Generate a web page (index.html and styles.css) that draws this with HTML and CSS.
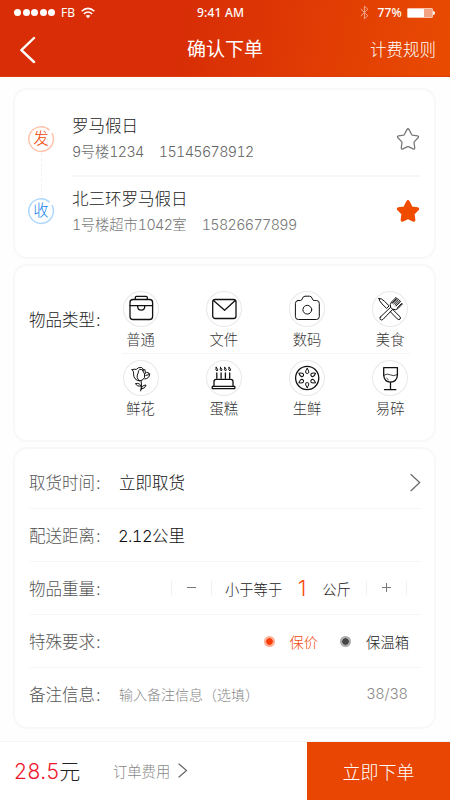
FILE: index.html
```html
<!DOCTYPE html>
<html lang="zh-CN">
<head>
<meta charset="utf-8">
<title>确认下单</title>
<link rel="stylesheet" href="styles.css">
</head>
<body>
<header class="header">
  <div class="status">
    <div class="status-left">
      <span class="dots"><i></i><i></i><i></i><i></i><i></i></span>
      <span class="carrier">FB</span>
      <svg class="wifi" viewBox="0 0 14 12" width="14" height="12"><path d="M.6 4.200Q7-1.400 13.400 4.200M2.800 6.900q4.200-3.700 8.400 0" fill="none" stroke="#fff" stroke-width="1.500"/><path d="M4.600 8.800Q7 7 9.400 8.800L7 11.200z" fill="#fff"/></svg>
    </div>
    <div class="clock">9:41 AM</div>
    <div class="status-right">
      <svg viewBox="0 0 9 15" width="9" height="15"><path d="M.8 4l7 6.800-3.400 3V1.200l3.400 3-7 6.800" fill="none" stroke="#f3a78f" stroke-width="1"/></svg>
      <span class="percent">77%</span>
      <span class="battery"></span>
    </div>
  </div>
  <div class="nav">
    <svg class="back" viewBox="0 0 16 28" width="16" height="28"><path d="M14 2L1.400 14.200 14 26" fill="none" stroke="#fff" stroke-width="2.400" stroke-linecap="round" stroke-linejoin="round"/></svg>
    <h1>确认下单</h1>
    <a class="rules">计费规则</a>
  </div>
</header>

<main>
  <section class="card addresses">
    <div class="route">
      <span class="badge from"><svg viewBox="0 0 28 28"><path d="M22.500 5.100A12.300 12.300 0 1 0 24.900 8.200"/></svg><b>发</b></span>
      <span class="track"></span>
      <span class="badge to"><svg viewBox="0 0 28 28"><path d="M22.500 5.100A12.300 12.300 0 1 0 24.900 8.200"/></svg><b>收</b></span>
    </div>
    <div class="places">
      <div class="place">
        <div><div class="name">罗马假日</div><div class="detail"><span><span class="n">9</span>号楼<span class="n">1234</span></span><span class="n">15145678912</span></div></div>
        <svg class="star" viewBox="0 0 26 26"><path d="M11.800 2.900Q13 .9 14.200 2.900l2.700 5.300q.2.400.6.500l5.800 1q2 .6.6 2l-4.200 4.400q-.3.300-.2.700l.8 5.700q0 1.900-1.800 1.200l-5-2.400q-.5-.2-1 0l-5 2.400q-1.800.7-1.800-1.200l.8-5.700q.1-.4-.2-.7L2.100 11.700q-1.400-1.400.6-2l5.800-1q.4-.1.6-.5z"/></svg>
      </div>
      <div class="place second">
        <div><div class="name">北三环罗马假日</div><div class="detail"><span><span class="n">1</span>号楼超市<span class="n">1042</span>室</span><span class="n">15826677899</span></div></div>
        <svg class="star on" viewBox="0 0 26 26"><path d="M11.800 2.900Q13 .9 14.200 2.900l2.700 5.300q.2.400.6.500l5.800 1q2 .6.6 2l-4.200 4.400q-.3.300-.2.700l.8 5.700q0 1.900-1.800 1.200l-5-2.400q-.5-.2-1 0l-5 2.400q-1.800.7-1.800-1.200l.8-5.700q.1-.4-.2-.7L2.100 11.700q-1.400-1.400.6-2l5.800-1q.4-.1.6-.5z"/></svg>
      </div>
    </div>
  </section>

  <section class="card types">
    <div class="types-label">物品类型<span class="colon">:</span></div>
    <div class="types-rows">
      <div class="types-row">
        <div class="type"><svg viewBox="0 0 36 36"><rect x="7" y="8.500" width="22.600" height="20" rx="3"/><path d="M12.300 8V6.500q0-1.200 1.200-1.200h9.600q1.200 0 1.200 1.200V8M7 14.700h22.600M14.600 15q.1 4.200 3.600 4.200t3.600-4.200"/></svg><span>普通</span></div>
        <div class="type"><svg viewBox="0 0 36 36"><rect x="6.700" y="8.500" width="23.300" height="19" rx="2.600"/><path d="M7.500 9.600l11.100 9.600L29.200 9.600"/></svg><span>文件</span></div>
        <div class="type"><svg class="fine" viewBox="0 0 36 36"><path d="M9 9.500h2.400q1.400 0 1.800-1.600Q14 5.200 16 5.200h4.600q2 0 2.800 2.700.4 1.600 1.800 1.600h2.200q2.900 0 2.900 2.900v13.200q0 2.900-2.900 2.900H9.300q-2.900 0-2.900-2.900V12.400q0-2.700 2.600-2.900z"/><circle cx="18.300" cy="18.700" r="4.400"/></svg><span>数码</span></div>
        <div class="type"><svg class="fine" viewBox="0 0 36 36"><path d="M7 7.400q2.200-.4 5.600 2.900l4.500 4.600-2.500 2.500-4.600-4.500Q6.600 9.500 7 7.400zM18.600 20.400l2-2L28 25.700q1 1.300 0 2.500-1.200 1-2.500-.1zM8.400 26l10.200-9.700 2.100 2.100-9.800 10.100q-1.400 1.100-2.600-.1-1-1.100.1-2.400zM18.600 16.300Q17.500 13 19.500 11l4.300-4.300M20.700 18.400q3.500 1.100 5.500-1l4-4.400M23.800 6.700l.7.800-4.100 4.300M25.700 7.900l.8.800-4.300 4.500M27.800 9.700l.8.900-4.500 4.400M30.200 13l-.6-.6-4.100 4.300M25.600 7.800L21 12.400M27.800 9.600l-4.700 4.600"/></svg><span>美食</span></div>
      </div>
      <div class="types-row">
        <div class="type"><svg class="fine" viewBox="0 0 36 36"><path d="M9.200 9.700q2.200-1 4-.2Q15 7 18.700 7.500q2.300 1.300 1.300 3.500Q19.100 8.800 16.800 9.500q-2 1-1.500 3.200-3 5.200 1.500 8.200-6.400-.8-6.200-7 .4-2.500-1.400-4.200zM20 11q2.500 2.800 1.500 6.500-1 2.900-4.700 3.400M19.700 10l2.200-.4.500 2.700M21.800 13.600q1.800-2.200 3.800-.8l.2 1.100 1-.1q-.2 4.700-5 5.200M22.800 15.400l3-.7M18.200 20.900q1 5-.5 10M18 26q-1-3.200-5.500-2.500 1.500 3.400 5.500 2.500zM18.300 29q.2-3.600 4.800-4-.8 3.800-4.800 4z"/></svg><span>鲜花</span></div>
        <div class="type"><svg viewBox="0 0 36 36"><path d="M8 26.100v-4.600q0-2.200 2.200-2.200h14.600q2.200 0 2.200 2.200v4.600M6.300 26.300h22.500v2.300H6.300zM10.800 13v5M15.100 13v5M19.400 13v5M23.700 13v5"/><path class="flames" d="M10.200 7.400q2.600 1.900.9 3.600-2-.5-.9-3.600zM14.500 7.400q2.600 1.900.9 3.600-2-.5-.9-3.600zM18.800 7.400q2.600 1.900.9 3.600-2-.5-.9-3.600zM23.100 7.400q2.600 1.900.9 3.600-2-.5-.9-3.600z"/></svg><span>蛋糕</span></div>
        <div class="type"><svg viewBox="0 0 36 36"><circle cx="18.200" cy="18" r="11.600"/><g id="seeds"><path id="seed" d="M18.200 8.400q2.300 3 1.500 4.400-1.500 1.500-3 0-.8-1.400 1.500-4.400z"/><use href="#seed" transform="rotate(60 18.200 18)"/><use href="#seed" transform="rotate(120 18.200 18)"/><use href="#seed" transform="rotate(180 18.200 18)"/><use href="#seed" transform="rotate(240 18.200 18)"/><use href="#seed" transform="rotate(300 18.200 18)"/></g></svg><span>生鲜</span></div>
        <div class="type"><svg viewBox="0 0 36 36"><path d="M11.700 7.700h13.700v7.500q-.5 6.600-6.900 6.900-6.300-.3-6.800-6.900zM18.500 22v7.500M12.500 29.700h11.300"/><path d="M12 15.200q3.300-2.200 6.400-.3 3.200 1.800 6.600-.2M14.700 18.200l1.700 1.600" stroke-width=".8"/></svg><span>易碎</span></div>
      </div>
    </div>
  </section>

  <section class="card form">
    <div class="row"><label>取货时间<span class="colon">:</span></label><span class="value">立即取货</span><svg class="chevron" viewBox="0 0 11 19" width="11" height="19"><path d="M1 1.500l8.700 8L1 17.700"/></svg></div>
    <div class="row"><label>配送距离<span class="colon">:</span></label><span class="value distance"><span class="n">2.12</span>公里</span></div>
    <div class="row"><label>物品重量<span class="colon">:</span></label>
      <div class="stepper">
        <button class="minus"></button>
        <div class="weight"><span>小于等于</span><strong>1</strong><span>公斤</span></div>
        <button class="plus"></button>
      </div>
    </div>
    <div class="row"><label>特殊要求<span class="colon">:</span></label>
      <div class="options"><span class="option on"><i></i>保价</span><span class="option"><i></i>保温箱</span></div>
    </div>
    <div class="row"><label>备注信息<span class="colon">:</span></label><span class="hint">输入备注信息（选填）</span><span class="count">38/38</span></div>
  </section>
</main>

<footer class="footer">
  <div class="price"><span>28.5</span>元</div>
  <div class="fee">订单费用<svg viewBox="0 0 10 15" width="10" height="15"><path d="M1 1l7.500 6.500L1 14"/></svg></div>
  <button class="submit">立即下单</button>
</footer>
</body>
</html>
```

FILE: styles.css
```css
* { box-sizing: border-box; }
body {
  margin: 0;
  width: 450px;
  height: 800px;
  overflow: hidden;
  display: flex;
  flex-direction: column;
  background: #fefefe;
  color: #222;
  font-family: Inter, "Noto Sans CJK SC", sans-serif;
  font-weight: 300;
}
svg { display: block; flex: none; }
button { border: 0; padding: 0; background: none; font: inherit; }
.n { font-variant-numeric: tabular-nums; letter-spacing: -.62px; }

.header {
  height: 77px;
  flex: none;
  color: #fff;
  background: linear-gradient(100deg, #d82d06 40%, #e84a02 98%);
  border-bottom: 1px solid #df3a10;
}
.status {
  height: 25px;
  display: grid;
  grid-template-columns: 1fr auto 1fr;
  align-items: center;
  padding: 0 17px 0 14px;
  font-family: "Noto Sans", sans-serif;
  font-size: 12px;
  font-weight: 500;
}
.status-left, .status-right { display: flex; align-items: center; }
.status-right { justify-content: flex-end; }
.dots { display: flex; gap: 1.500px; }
.dots i { width: 7px; height: 7px; border-radius: 50%; background: #fff; }
.carrier { margin: 0 6px 0 6px; font-weight: 400; }
.clock { width: 47px; white-space: nowrap; margin-right: 6px; letter-spacing: .2px; }
.percent { margin: 0 5px 0 8px; letter-spacing: .2px; }
.battery {
  position: relative;
  width: 26px;
  height: 10px;
  border-radius: 1px;
  background: linear-gradient(90deg, #fff 68%, #f3a283 68%);
  border: 1px solid #f8c1a9;
}
.battery::after {
  content: "";
  position: absolute;
  right: -3px;
  top: 2px;
  width: 2px;
  height: 4px;
  border-radius: 0 2px 2px 0;
  background: #fff;
}
.nav {
  height: 50px;
  display: grid;
  grid-template-columns: 1fr auto 1fr;
  align-items: center;
  padding: 0 14px 0 20px;
}
.nav h1 { margin: 0 6px 0 0; font-size: 19px; font-weight: 400; line-height: 28px; }
.rules { justify-self: end; font-size: 16.500px; line-height: 24px; }

main { padding: 11px 14px 0 13px; display: flex; flex-direction: column; gap: 5px; }
.card { border: 2px solid #f8f8f8; border-radius: 14px; background: #fff; }

.addresses { height: 171px; display: flex; padding: 0 13px 0 12px; }
.route { width: 28px; padding-top: 35px; display: flex; flex-direction: column; align-items: center; }
.badge { position: relative; width: 28px; height: 28px; display: grid; place-items: center; font-size: 15.500px; line-height: 28px; }
.badge svg { position: absolute; inset: 0; fill: none; stroke-width: 1.500; }
.badge b { font-weight: 300; }
.from { color: #f04400; }
.from svg { stroke: #ffc3ad; }
.to { color: #1c86ee; }
.to svg { stroke: #add7ff; }
.track { height: 44px; border-left: 1px dashed #f2f2f2; }
.places { flex: 1; margin-left: 17px; }
.place { display: flex; justify-content: space-between; height: 87px; padding-top: 24px; border-bottom: 2px solid #f8f8f8; }
.place.second { padding-top: 10px; border: 0; }
.name { font-size: 16.500px; line-height: 24px; }
.detail { display: flex; gap: 15px; font-size: 14.300px; line-height: 28px; color: #666; }
.second .detail { color: #777; }
.star { width: 24px; height: 24px; margin: 13px 1px 0 0; fill: none; stroke: #777; stroke-width: 1.400; }
.second .star { margin-top: 12px; }
.star.on { fill: #f04c00; stroke: #f04c00; }

.types { height: 178px; display: flex; padding-left: 14px; }
.types-label { width: 92px; padding-top: 42px; font-size: 16.500px; line-height: 24px; }
.colon { margin-left: 1px; }
.types-rows { padding-top: 25px; margin-left: -22px; }
.types-row { display: grid; grid-template-columns: repeat(4, 83.200px); height: 69px; }
.type { display: flex; flex-direction: column; align-items: center; font-size: 14.300px; line-height: 20px; color: #333; }
.type > svg {
  width: 36px;
  height: 36px;
  margin-bottom: 3px;
  border-radius: 50%;
  box-shadow: inset 0 0 0 1px #e8e8e8;
  fill: none;
  stroke: #111;
  stroke-width: 1.300;
  stroke-linejoin: round;
  stroke-linecap: round;
}
.type > svg.fine { stroke-width: 1; }
.flames, #seeds { stroke-width: 1; }
.type:first-child { position: relative; }
.types-row:first-child .type:first-child::after {
  content: "";
  position: absolute;
  left: 23px;
  top: 62px;
  width: 288px;
  height: 1px;
  background: #f6f6f6;
}

.form { height: 282px; padding: 7px 13px 0 14px; }
.row { height: 53px; display: flex; align-items: center; border-bottom: 1px solid #f6f6f6; font-size: 16.500px; }
.row:last-child { border: 0; height: 52px; }
.row label { width: 90px; color: #555; }
.value { color: #111; }
.distance { margin-left: -1px; }
.chevron, .fee svg { fill: none; stroke: #666; stroke-width: 1.200; stroke-linecap: round; }
.chevron { margin-left: auto; }
.stepper { margin-left: auto; margin-right: 14px; display: flex; align-items: center; height: 24px; font-size: 14.300px; }
.stepper button { position: relative; width: 41px; height: 14px; border: solid #f0f0f0; border-width: 0 1px; }
.stepper button::before, .plus::after {
  content: "";
  position: absolute;
  left: 15px;
  top: 6px;
  width: 9px;
  height: 1px;
  background: #777;
}
.plus::after { transform: rotate(90deg); }
.weight { width: 154px; display: flex; align-items: center; padding-left: 13px; }
.weight strong { width: 40px; text-align: center; font-size: 21px; font-weight: 300; color: #fa4a12; }
.options { margin-left: auto; margin-right: 12px; display: flex; gap: 22px; font-size: 14.300px; }
.option { display: flex; align-items: center; }
.option i { width: 11px; height: 11px; margin-right: 15px; border: 2.500px solid #aaa; border-radius: 50%; background: #444; background-clip: padding-box; }
.option.on { color: #f04c10; }
.option.on i { border-color: #ffac92; background-color: #fa3c08; }
.hint { font-size: 14px; color: #888; }
.count { margin-left: auto; margin-right: 13px; font-size: 14.600px; letter-spacing: .2px; color: #888; }

.footer { margin-top: auto; height: 59px; flex: none; display: flex; align-items: center; border-top: 1px solid #f4f4f4; padding-left: 14px; background: #fff; }
.price { width: 99px; margin-top: -2px; font-size: 21px; letter-spacing: .5px; white-space: nowrap; }
.price span { color: #f0142c; }
.fee { display: flex; align-items: center; gap: 8px; margin-top: -2px; font-size: 14.300px; color: #888; }
.submit { margin-left: auto; width: 143px; height: 58px; background: #e84602; color: #fff; font-size: 18px; }
```
